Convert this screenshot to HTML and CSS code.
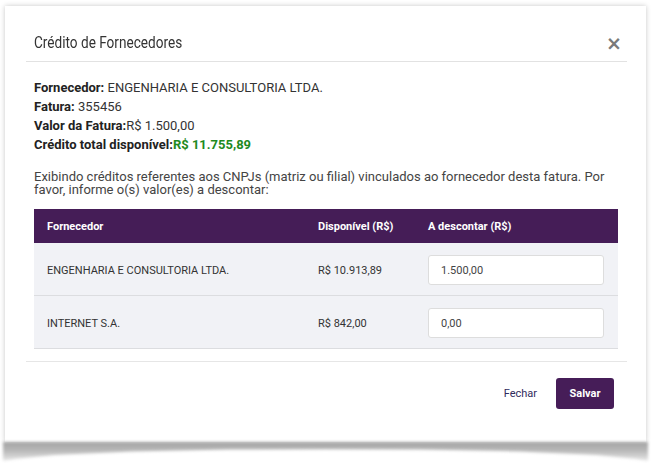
FILE: index.html
```html
<!DOCTYPE html>
<html lang="pt-BR">
<head>
<meta charset="utf-8">
<title>Crédito de Fornecedores</title>
<link rel="stylesheet" href="styles.css">
</head>
<body>
<div class="stage">
  <div class="modal">
    <div class="modal-header">
      <h1 class="modal-title">Crédito de Fornecedores</h1>
      <span class="close">&times;</span>
    </div>
    <div class="modal-body">
      <div class="info">
        <div><b>Fornecedor:</b> ENGENHARIA E CONSULTORIA LTDA.</div>
        <div><b>Fatura:</b> 355456</div>
        <div><b>Valor da Fatura:</b>R$ 1.500,00</div>
        <div><b>Crédito total disponível:</b><b class="green">R$ 11.755,89</b></div>
      </div>
      <p class="desc">Exibindo créditos referentes aos CNPJs (matriz ou filial) vinculados ao fornecedor desta fatura. Por favor, informe o(s) valor(es) a descontar:</p>
      <div class="table">
        <div class="row head">
          <div class="cell">Fornecedor</div>
          <div class="cell">Disponível (R$)</div>
          <div class="cell">A descontar (R$)</div>
        </div>
        <div class="row">
          <div class="cell">ENGENHARIA E CONSULTORIA LTDA.</div>
          <div class="cell">R$ 10.913,89</div>
          <div class="cell"><input class="input" type="text" value="1.500,00"></div>
        </div>
        <div class="row">
          <div class="cell">INTERNET S.A.</div>
          <div class="cell">R$ 842,00</div>
          <div class="cell"><input class="input" type="text" value="0,00"></div>
        </div>
      </div>
    </div>
    <div class="modal-footer">
      <button class="btn-link">Fechar</button>
      <button class="btn-primary">Salvar</button>
    </div>
  </div>
  <div class="curl"><div class="curl-shape"></div></div>
</div>
</body>
</html>
```

FILE: styles.css
```css
html, body {
  margin: 0;
  padding: 0;
  background: #ffffff;
}
body {
  font-family: Roboto, "Liberation Sans", Arial, sans-serif;
  color: #333333;
}
.stage {
  width: 641px;
  padding: 6px 15px 0 5px;
}
.modal {
  width: 641px;
  height: 436px;
  box-sizing: border-box;
  background: #ffffff;
  box-shadow: 0 0 5px rgba(0, 0, 0, 0.22);
  padding: 0 19px 0 21px;
  display: flex;
  flex-direction: column;
}
.curl {
  height: 21px;
  margin: 0 -2px;
  filter: blur(1.5px);
}
.curl-shape {
  height: 100%;
  background: linear-gradient(to bottom, #a3a3a3 0%, #b8b8b8 40%, #d8d8d8 75%, rgba(255, 255, 255, 0) 100%);
  clip-path: polygon(0 0, 100% 0, 100% 92%, 98% 80%, 92% 62%, 80% 45%, 65% 36%, 50% 34%, 35% 36%, 20% 45%, 8% 62%, 2% 80%, 0 92%);
}
.modal-header {
  display: flex;
  align-items: center;
  justify-content: space-between;
  height: 56px;
  box-sizing: border-box;
  padding: 18px 5px 0 8px;
  border-bottom: 1px solid #e2e2e2;
}
.modal-title {
  margin: 0;
  font-family: Roboto, sans-serif;
  font-weight: 400;
  font-size: 16px;
  line-height: 20px;
  color: #333333;
  transform: scaleX(0.85);
  transform-origin: left center;
}
.close {
  font-family: "DejaVu Sans", sans-serif;
  font-size: 19px;
  font-weight: 700;
  line-height: 20px;
  color: #7a7a7a;
}
.modal-body {
  padding: 16px 9px 0 8px;
}
.info {
  font-size: 13px;
  line-height: 19px;
  color: #333333;
}
.info b {
  color: #222222;
  font-weight: 700;
}
.info b.green {
  color: #1e8a1e;
}
.desc {
  margin: 16px 0 13px;
  font-size: 13px;
  line-height: 13px;
  color: #444444;
}
.table {
  display: flex;
  flex-direction: column;
}
.row {
  display: grid;
  grid-template-columns: 271px 110px 1fr;
  align-items: center;
  background: #f1f2f6;
  border-bottom: 1px solid #dcdde0;
  padding: 12px 0 10px;
  font-size: 11px;
  color: #333333;
}
.row.head {
  background: #451d57;
  color: #ffffff;
  font-weight: 700;
  border-bottom: none;
  padding: 0;
  height: 34px;
}
.cell {
  padding: 0 13px;
}
.input {
  display: block;
  width: 176px;
  height: 30px;
  box-sizing: border-box;
  border: 1px solid #dddddd;
  border-radius: 3px;
  background: #ffffff;
  padding: 0 12px;
  font-family: Roboto, "Liberation Sans", sans-serif;
  font-size: 11px;
  color: #444444;
  outline: none;
}
.modal-footer {
  margin-top: 12px;
  border-top: 1px solid #e6e6e6;
  display: flex;
  justify-content: flex-end;
  align-items: center;
  padding: 16px 13px 0 0;
  gap: 19px;
}
.btn-link {
  border: none;
  background: none;
  padding: 0;
  font-family: Roboto, "Liberation Sans", sans-serif;
  font-size: 11px;
  color: #2f2a5c;
  cursor: pointer;
}
.btn-primary {
  border: none;
  border-radius: 3px;
  background: #461d58;
  color: #ffffff;
  font-family: Roboto, "Liberation Sans", sans-serif;
  font-weight: 700;
  font-size: 11px;
  width: 58px;
  height: 31px;
  cursor: pointer;
}
```
